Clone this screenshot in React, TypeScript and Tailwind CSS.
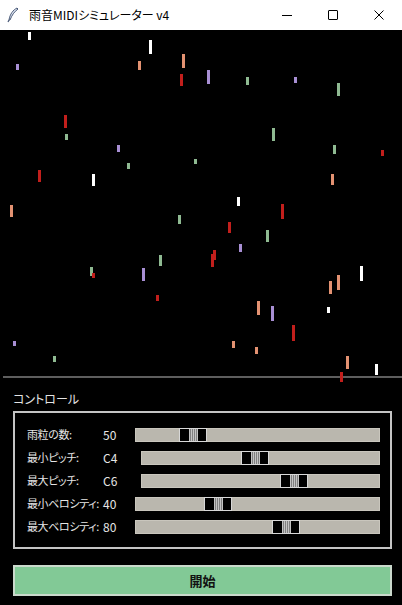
import React from "react";

const C = {
  W: "#ffffff",
  P: "#a88fd4",
  O: "#e39272",
  R: "#c21f1c",
  G: "#8fba92",
};

// [x, y (page), height, colour]
const drops: [number, number, number, keyof typeof C][] = [
  [28, 32, 8, "W"], [16, 64, 6, "P"], [149, 40, 14, "W"], [138, 61, 9, "O"],
  [182, 54, 14, "O"], [180, 74, 12, "R"], [64, 115, 13, "R"], [65, 134, 6, "G"],
  [117, 145, 7, "P"], [207, 70, 14, "P"], [246, 77, 8, "G"], [294, 77, 6, "P"],
  [337, 83, 13, "G"], [272, 128, 13, "G"], [333, 145, 9, "G"], [127, 163, 6, "G"],
  [194, 159, 5, "G"], [38, 170, 12, "R"], [92, 174, 12, "W"], [10, 205, 12, "O"],
  [178, 215, 9, "G"], [159, 255, 11, "G"], [90, 267, 9, "G"], [92, 273, 5, "R"],
  [142, 268, 13, "P"], [381, 150, 6, "R"], [331, 174, 11, "O"], [237, 197, 9, "W"],
  [281, 204, 15, "R"], [228, 222, 11, "R"], [266, 230, 12, "G"], [239, 244, 8, "P"],
  [213, 250, 10, "R"], [211, 254, 13, "R"], [360, 266, 15, "W"], [156, 295, 6, "R"],
  [13, 341, 5, "P"], [53, 356, 6, "G"], [337, 275, 15, "O"], [329, 281, 13, "O"],
  [327, 307, 6, "W"], [257, 301, 14, "O"], [271, 306, 15, "P"], [292, 325, 16, "R"],
  [232, 341, 7, "O"], [255, 347, 7, "O"], [346, 356, 13, "O"], [375, 364, 11, "W"],
  [340, 372, 10, "R"],
];

const rows = [
  { label: "雨粒の数:", value: "50", indent: false, thumb: 43 },
  { label: "最小ピッチ:", value: "C4", indent: true, thumb: 99 },
  { label: "最大ピッチ:", value: "C6", indent: true, thumb: 138 },
  { label: "最小ベロシティ:", value: "40", indent: false, thumb: 68 },
  { label: "最大ベロシティ:", value: "80", indent: false, thumb: 136 },
];

const jp = { fontFamily: '"Noto Sans CJK JP", "Noto Sans", sans-serif' };

export default function App() {
  return (
    <div className="w-[402px] min-h-[605px] bg-black [font-feature-settings:'palt']" style={jp}>
      {/* title bar */}
      <div className="h-[30px] bg-white flex items-center">
        <svg width="14" height="16" viewBox="0 0 14 16" className="ml-[6px]">
          <path d="M11 1 C7 3 4 7 3 13 L4 13 C6 8 8 5 12 2 Z" fill="#dfe6f2" stroke="#4a5a78" strokeWidth="1" />
          <path d="M3 13 L2 15" stroke="#4a5a78" strokeWidth="1.2" />
        </svg>
        <span className="ml-[9px] text-[12px] text-black leading-none">雨音MIDIシミュレーター v4</span>
        <div className="ml-auto flex h-full">
          <div className="w-[46px] flex items-center justify-center">
            <div className="w-[10px] h-px bg-black" />
          </div>
          <div className="w-[46px] flex items-center justify-center">
            <div className="w-[10px] h-[10px] border border-black rounded-[1px]" />
          </div>
          <div className="w-[46px] flex items-center justify-center">
            <svg width="10" height="10" viewBox="0 0 10 10">
              <path d="M0.5 0.5 L9.5 9.5 M9.5 0.5 L0.5 9.5" stroke="black" strokeWidth="1" />
            </svg>
          </div>
        </div>
      </div>

      {/* canvas */}
      <div className="relative">
        <div className="h-[346px] bg-black" />
        <div className="h-[2px] ml-[3px] bg-[#5e5e5e]" />
        {drops.map(([x, y, h, c], i) => (
          <div
            key={i}
            className="absolute w-[3px]"
            style={{ left: x, top: y - 30, height: h, background: C[c] }}
          />
        ))}
      </div>

      {/* controls */}
      <div className="px-[13px] pr-[10px]">
        <div className="mt-[13px] text-[12px] leading-[16px] text-[#e4e4e4]">コントロール</div>
        <div className="mt-[4px] w-[379px] border-2 border-[#c4c4c4] pt-[10px] pb-[9px] pl-[12px] pr-[10px]">
          {rows.map((r) => (
            <div key={r.label} className="h-[23px] flex items-center text-[12px] text-[#e6e6e6]">
              <span className="w-[76px] whitespace-nowrap text-[11px] tracking-[-0.4px]">{r.label}</span>
              <span className="w-[32px]">{r.value}</span>
              <div className={`flex-1 h-[14px] bg-[#bab7ae] border border-[#c9c6bd] flex items-center ${r.indent ? "ml-[6px]" : ""}`}>
                <div className="h-[14px] w-[28px] border border-[#d8d8d8] bg-black flex" style={{ marginLeft: r.thumb }}>
                  <div className="w-[9px] bg-black" />
                  <div className="w-[9px] flex justify-between bg-[#c4c4c4] px-px">
                    <div className="w-px bg-[#808080]" />
                    <div className="w-px bg-[#808080]" />
                    <div className="w-px bg-[#808080]" />
                    <div className="w-px bg-[#808080]" />
                  </div>
                  <div className="flex-1 bg-black" />
                </div>
              </div>
            </div>
          ))}
        </div>
        <button className="mt-[16px] w-[379px] h-[31px] bg-[#82c996] border-2 border-[#cad9cc] flex items-center justify-center text-[13px] font-bold text-[#111]">
          開始
        </button>
      </div>
    </div>
  );
}
